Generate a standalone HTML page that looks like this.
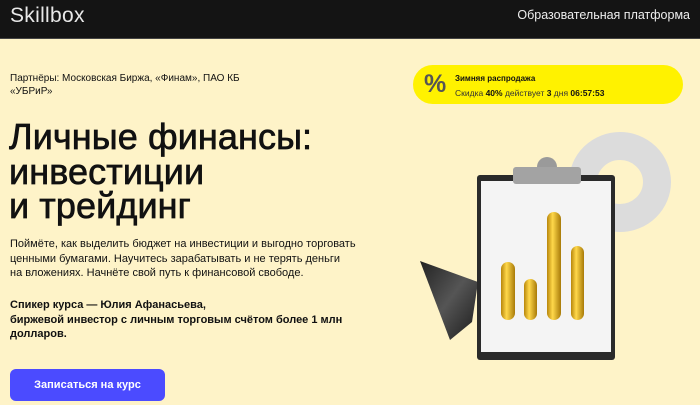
<!DOCTYPE html>
<html><head><meta charset="utf-8"><style>
*{margin:0;padding:0;box-sizing:border-box}
body{width:700px;height:405px;overflow:hidden;background:#fef3c8;font-family:"Liberation Sans",sans-serif;color:#111;position:relative}
.hdr{position:absolute;left:0;top:0;width:700px;height:39px;background:#141414;border-bottom:1px solid #444}
.logo{position:absolute;left:10px;top:4px;color:#e8e8e8;font-size:21px;letter-spacing:0.3px}
.plat{position:absolute;right:10px;top:8px;color:#eee;font-size:12.5px}
.part{position:absolute;left:10px;top:72px;font-size:10px;line-height:13px;width:240px}
h1{position:absolute;left:9px;top:120px;font-size:36px;line-height:34.5px;font-weight:normal;-webkit-text-stroke:0.7px #111;letter-spacing:0.1px}
.desc{position:absolute;left:10px;top:237px;font-size:11px;line-height:14.6px;width:360px}
.sp{position:absolute;left:10px;top:298px;font-size:11px;line-height:14.6px;font-weight:bold;width:345px}
.btn{position:absolute;left:10px;top:369px;width:155px;height:32px;background:#4b4bff;border-radius:6px;color:#fff;font-size:11px;font-weight:bold;text-align:center;line-height:32px}
.ban{position:absolute;left:413px;top:65px;width:270px;height:39px;background:#fff200;border-radius:20px}
.pct{position:absolute;left:11px;top:5px;font-size:25px;font-weight:bold;color:#555}
.b1{position:absolute;left:42px;top:9px;font-size:8px;font-weight:bold}
.b2{position:absolute;left:42px;top:23px;font-size:8.5px;color:#333}
.b2 b{color:#111}
</style></head><body>
<div class="hdr"><div class="logo">Skillbox</div><div class="plat">Образовательная платформа</div></div>
<div class="part">Партнёры: Московская Биржа, «Финам», ПАО КБ «УБРиР»</div>
<h1>Личные финансы:<br>инвестиции<br>и трейдинг</h1>
<div class="desc">Поймёте, как выделить бюджет на инвестиции и выгодно торговать ценными бумагами. Научитесь зарабатывать и не терять деньги<br>на вложениях. Начнёте свой путь к финансовой свободе.</div>
<div class="sp">Спикер курса — Юлия Афанасьева,<br>биржевой инвестор с личным торговым счётом более 1 млн долларов.</div>
<div class="btn">Записаться на курс</div>
<div class="ban"><div class="pct">%</div><div class="b1">Зимняя распродажа</div><div class="b2">Скидка <b>40%</b> действует <b>3</b> дня <b>06:57:53</b></div></div>
<svg style="position:absolute;left:0;top:0" width="700" height="405">
<defs>
<linearGradient id="g" x1="0" x2="1"><stop offset="0" stop-color="#b8860b"/><stop offset="0.4" stop-color="#ffd84a"/><stop offset="1" stop-color="#a87a08"/></linearGradient>
<linearGradient id="c" x1="0" x2="1" y1="0" y2="1"><stop offset="0" stop-color="#222"/><stop offset="0.5" stop-color="#555"/><stop offset="1" stop-color="#1a1a1a"/></linearGradient>
</defs>
<ellipse cx="620" cy="182" rx="37" ry="36" fill="none" stroke="#dcdcdc" stroke-width="28"/>
<polygon points="420,261 478,282 472,322 450,340" fill="url(#c)"/>
<rect x="477" y="175" width="138" height="185" rx="3" fill="#2a2a2a"/>
<rect x="481" y="181" width="130" height="171" fill="#f4f4f4"/>
<circle cx="547" cy="167" r="10" fill="#9a9a9a"/>
<rect x="513" y="167" width="68" height="17" rx="3" fill="#a3a3a3"/>
<rect x="501" y="262" width="14" height="58" rx="7" fill="url(#g)"/>
<rect x="524" y="279" width="13" height="41" rx="6.5" fill="url(#g)"/>
<rect x="547" y="212" width="14" height="108" rx="7" fill="url(#g)"/>
<rect x="571" y="246" width="13" height="74" rx="6.5" fill="url(#g)"/>
</svg>
</body></html>
